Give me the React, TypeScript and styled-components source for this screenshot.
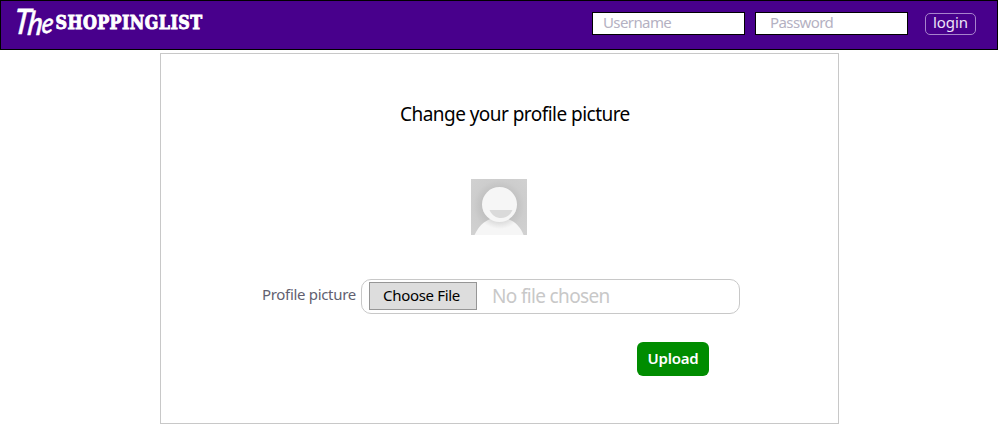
import React from "react";
import styled, { createGlobalStyle } from "styled-components";

const GlobalStyle = createGlobalStyle`
  * { box-sizing: border-box; }
  body { margin: 0; background: #fff; font-family: "Noto Sans", "Open Sans", sans-serif; }
`;

const Header = styled.header`
  display: flex;
  align-items: flex-start;
  justify-content: space-between;
  height: 50px;
  padding: 0 21px 0 0;
  background: #48008c;
  border: 1px solid #000;
`;

const Logo = styled.svg`
  display: block;
  width: 260px;
  height: 46px;
  overflow: visible;
  fill: #fff;
  stroke: #fff;
`;

const Script = styled.text`
  font-family: "Lato", sans-serif;
  font-style: italic;
  font-weight: 500;
  stroke-width: 0.5px;
`;

const Slab = styled.text`
  font-family: "DejaVu Serif", serif;
  font-size: 18.5px;
  font-weight: 700;
  letter-spacing: 0.5px;
  stroke-width: 1px;
`;

const LoginForm = styled.form`
  display: flex;
  padding-top: 11px;
`;

const Field = styled.input<{ $indent: number }>`
  width: 153px;
  height: 23px;
  margin-right: 10px;
  padding: 0 0 3px ${(p) => p.$indent}px;
  border: 1px solid #000;
  border-radius: 0;
  background: #fff;
  font: 15px "Noto Sans", sans-serif;
  letter-spacing: -0.6px;
  outline: none;
  &::placeholder { color: #b4b1c2; opacity: 1; }
`;

const LoginButton = styled.button`
  width: 51px;
  height: 22px;
  margin: 1px 0 0 7px;
  padding: 0 0 3px;
  border: 1px solid #a783cc;
  border-radius: 5px;
  background: transparent;
  color: #eee5f8;
  font: 15px/17px "Noto Sans", sans-serif;
  letter-spacing: -0.1px;
`;

const Panel = styled.main`
  width: 679px;
  height: 371px;
  margin: 3px 0 0 160px;
  border: 1px solid #c8c8c8;
  display: flex;
  flex-direction: column;
`;

const Title = styled.h1`
  margin: 46px 0 0 239px;
  font-size: 19px;
  font-weight: 400;
  line-height: 28px;
  letter-spacing: -0.54px;
  white-space: nowrap;
  color: #000;
`;

const Avatar = styled.svg`
  display: block;
  width: 56px;
  height: 56px;
  margin: 51px 0 0 310px;
`;

const FileRow = styled.div`
  display: flex;
  margin: 44px 0 0 101px;
`;

const Label = styled.label`
  width: 99px;
  font-size: 15px;
  line-height: 30px;
  letter-spacing: -0.32px;
  white-space: nowrap;
  color: #625f70;
`;

const FileBox = styled.div`
  display: flex;
  width: 379px;
  height: 35px;
  padding: 2px 0 0 7px;
  border: 1px solid #c8c8c8;
  border-radius: 10px;
`;

const ChooseButton = styled.button`
  width: 108px;
  height: 28px;
  padding: 0 3px 2px 0;
  border: 1px solid #969696;
  background: #ddd;
  color: #000;
  font: 15px/24px "Noto Sans", sans-serif;
  letter-spacing: -0.32px;
  white-space: nowrap;
`;

const FileStatus = styled.span`
  margin-left: 15px;
  color: #c8c8c8;
  font-size: 19px;
  line-height: 29px;
  letter-spacing: -0.66px;
`;

const UploadButton = styled.button`
  width: 72px;
  height: 34px;
  margin: 28px 0 0 476px;
  padding: 0 0 2px;
  border: 0;
  border-radius: 6px;
  background: #008c00;
  color: #fff;
  font: 600 15px/32px "Noto Sans", sans-serif;
  letter-spacing: -0.2px;
`;

export default function App() {
  return (
    <>
      <GlobalStyle />
      <Header>
        <Logo viewBox="1 1 260 46" aria-label="The Shoppinglist">
          <Script fontSize="35" transform="translate(13 34) skewX(-7) scale(0.85 1)">
            T<tspan dx="-3" dy="0.5" fontSize="33">h</tspan><tspan dx="-1" dy="-1.500" fontSize="28">e</tspan>
          </Script>
          <Slab x="55.500" y="28.800" textLength="147" lengthAdjust="spacingAndGlyphs">SHOPPINGLIST</Slab>
        </Logo>
        <LoginForm onSubmit={(e) => e.preventDefault()}>
          <Field $indent={10} placeholder="Username" />
          <Field $indent={14} type="password" placeholder="Password" />
          <LoginButton type="submit">login</LoginButton>
        </LoginForm>
      </Header>
      <Panel>
        <Title>Change your profile picture</Title>
        <Avatar viewBox="0 0 56 56" aria-label="Profile picture">
          <defs>
            <radialGradient id="backdrop" cx="50%" cy="48%" r="70%">
              <stop offset="0.4" stopColor="#bfbfbf" />
              <stop offset="0.65" stopColor="#cdcdcd" />
              <stop offset="1" stopColor="#d1d1d1" />
            </radialGradient>
            <radialGradient id="shade" gradientUnits="userSpaceOnUse" cx="28.5" cy="26" r="24">
              <stop offset="0.7" stopColor="#dcdcdc" />
              <stop offset="1" stopColor="#f6f6f6" />
            </radialGradient>
          </defs>
          <rect width="56" height="56" fill="url(#backdrop)" />
          <path d="M3.5 56C8 46 16 38.500 28 38.500S49 46 52.500 56Z" fill="url(#shade)" />
          <circle cx="28.500" cy="25.500" r="17.500" fill="#f6f6f6" />
          <path d="M18.500 31H41.500C39 36.500 35 39 30 39S21 36.500 18.500 31Z" fill="#dadada" />
        </Avatar>
        <FileRow>
          <Label>Profile picture</Label>
          <FileBox>
            <ChooseButton type="button">Choose File</ChooseButton>
            <FileStatus>No file chosen</FileStatus>
          </FileBox>
        </FileRow>
        <UploadButton type="button">Upload</UploadButton>
      </Panel>
    </>
  );
}
